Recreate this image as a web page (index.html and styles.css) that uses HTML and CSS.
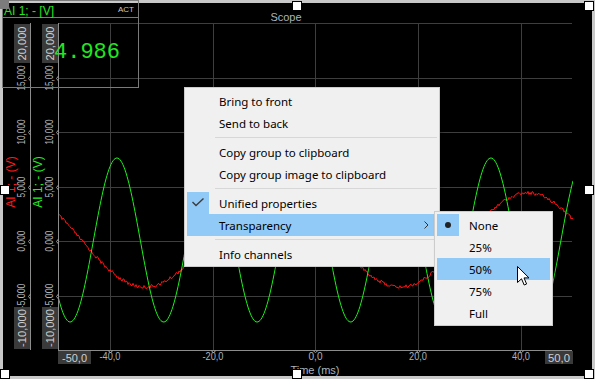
FILE: index.html
```html
<!DOCTYPE html>
<html lang="en">
<head>
  <meta charset="UTF-8">
  <meta name="viewport" content="width=device-width, initial-scale=1.0">
  <title>Scope</title>
  <link rel="stylesheet" href="styles.css">
</head>
<body>

  <div class="scope">
    <svg class="plot" width="595" height="379" viewBox="0 0 595 379">
      <defs>
        <clipPath id="plotArea"><rect x="58" y="23" width="515" height="328"/></clipPath>
      </defs>

      <text class="title" x="286" y="21" text-anchor="middle">Scope</text>

      <!-- grid -->
      <g class="grid">
        <line x1="58" y1="23.5" x2="572" y2="23.5"/>
        <line x1="58" y1="78.5" x2="572" y2="78.5"/>
        <line x1="58" y1="132.5" x2="572" y2="132.5"/>
        <line x1="58" y1="187.5" x2="572" y2="187.5"/>
        <line x1="58" y1="241.5" x2="572" y2="241.5"/>
        <line x1="58" y1="296.5" x2="572" y2="296.5"/>
        <line x1="110.5" y1="23" x2="110.5" y2="350"/>
        <line x1="213.5" y1="23" x2="213.5" y2="350"/>
        <line x1="315.5" y1="23" x2="315.5" y2="350"/>
        <line x1="418.5" y1="23" x2="418.5" y2="350"/>
        <line x1="521.5" y1="23" x2="521.5" y2="350"/>
      </g>

      <!-- traces -->
      <g clip-path="url(#plotArea)">
        <polyline id="traceRed" class="trace red"/>
        <polyline id="traceGreen" class="trace green"/>
      </g>

      <!-- axes -->
      <g class="axis">
        <line x1="30.5" y1="23" x2="30.5" y2="350"/>
        <line x1="58.5" y1="23" x2="58.5" y2="351"/>
        <line x1="58" y1="350.5" x2="572" y2="350.5"/>
      </g>
      <path class="tick" d="M30.5,76 l-2,2.5 l2,2.5 M30.5,130 l-2,2.5 l2,2.5 M30.5,185 l-2,2.5 l2,2.5 M30.5,239 l-2,2.5 l2,2.5 M30.5,294 l-2,2.5 l2,2.5
        M58.5,76 l-2,2.5 l2,2.5 M58.5,130 l-2,2.5 l2,2.5 M58.5,185 l-2,2.5 l2,2.5 M58.5,239 l-2,2.5 l2,2.5 M58.5,294 l-2,2.5 l2,2.5
        M108,350.5 l2.5,2 l2.5,-2 M211,350.5 l2.5,2 l2.5,-2 M313,350.5 l2.5,2 l2.5,-2 M416,350.5 l2.5,2 l2.5,-2 M519,350.5 l2.5,2 l2.5,-2"/>

      <!-- y tick labels -->
      <g class="tick-label" text-anchor="middle">
        <text transform="translate(25 78) rotate(-90)" textLength="25" lengthAdjust="spacingAndGlyphs">15,000</text>
        <text transform="translate(25 132) rotate(-90)" textLength="25" lengthAdjust="spacingAndGlyphs">10,000</text>
        <text transform="translate(25 187) rotate(-90)" textLength="21" lengthAdjust="spacingAndGlyphs">5,000</text>
        <text transform="translate(25 241) rotate(-90)" textLength="21" lengthAdjust="spacingAndGlyphs">0,000</text>
        <text transform="translate(25 296) rotate(-90)" textLength="25" lengthAdjust="spacingAndGlyphs">-5,000</text>
        <text transform="translate(53 78) rotate(-90)" textLength="25" lengthAdjust="spacingAndGlyphs">15,000</text>
        <text transform="translate(53 132) rotate(-90)" textLength="25" lengthAdjust="spacingAndGlyphs">10,000</text>
        <text transform="translate(53 187) rotate(-90)" textLength="21" lengthAdjust="spacingAndGlyphs">5,000</text>
        <text transform="translate(53 241) rotate(-90)" textLength="21" lengthAdjust="spacingAndGlyphs">0,000</text>
        <text transform="translate(53 296) rotate(-90)" textLength="25" lengthAdjust="spacingAndGlyphs">-5,000</text>
      </g>

      <!-- x tick labels -->
      <g class="tick-label" text-anchor="middle">
        <text x="110" y="360" textLength="21" lengthAdjust="spacingAndGlyphs">-40,0</text>
        <text x="213" y="360" textLength="21" lengthAdjust="spacingAndGlyphs">-20,0</text>
        <text x="315.5" y="360" textLength="14" lengthAdjust="spacingAndGlyphs">0,0</text>
        <text x="418" y="360" textLength="18" lengthAdjust="spacingAndGlyphs">20,0</text>
        <text x="521" y="360" textLength="18" lengthAdjust="spacingAndGlyphs">40,0</text>
      </g>
      <text class="title" x="315" y="374" text-anchor="middle">Time (ms)</text>

      <!-- range boxes -->
      <rect class="box" x="14" y="24" width="16" height="39"/>
      <rect class="box" x="42" y="24" width="16" height="39"/>
      <rect class="box" x="14" y="307" width="16" height="42"/>
      <rect class="box" x="42" y="307" width="16" height="42"/>
      <rect class="box" x="58" y="351" width="33" height="13"/>
      <rect class="box" x="545" y="351" width="28" height="13"/>
      <g class="box-label" text-anchor="middle">
        <text transform="translate(26 43.5) rotate(-90)" textLength="34" lengthAdjust="spacingAndGlyphs">20,000</text>
        <text transform="translate(54 43.5) rotate(-90)" textLength="34" lengthAdjust="spacingAndGlyphs">20,000</text>
        <text transform="translate(26 328) rotate(-90)" textLength="38" lengthAdjust="spacingAndGlyphs">-10,000</text>
        <text transform="translate(54 328) rotate(-90)" textLength="38" lengthAdjust="spacingAndGlyphs">-10,000</text>
        <text x="74.5" y="361.5" textLength="25" lengthAdjust="spacingAndGlyphs">-50,0</text>
        <text x="559" y="361.5" textLength="22" lengthAdjust="spacingAndGlyphs">50,0</text>
      </g>

      <!-- channel names -->
      <text class="channel red-text" transform="translate(15 182) rotate(-90)" text-anchor="middle">AI 1; - (V)</text>
      <text class="channel green-text" transform="translate(42 182) rotate(-90)" text-anchor="middle">AI 1; - (V)</text>
    </svg>

    <div class="meter">
      <div class="meter-head">
        <span class="meter-name">AI 1; - [V]</span>
        <span class="meter-act">ACT</span>
      </div>
      <div class="meter-value">4.986</div>
    </div>

    <div class="handle grip-tl"></div>
    <div class="handle grip-tm"></div>
    <div class="handle grip-tr"></div>
    <div class="handle grip-ml"></div>
    <div class="handle grip-mr"></div>
    <div class="handle grip-bl"></div>
    <div class="handle grip-bm"></div>
    <div class="handle grip-br"></div>

    <div class="menu main-menu">
      <div class="item"><span class="icon"></span><span class="label">Bring to front</span></div>
      <div class="item"><span class="icon"></span><span class="label">Send to back</span></div>
      <div class="sep"></div>
      <div class="item"><span class="icon"></span><span class="label">Copy group to clipboard</span></div>
      <div class="item"><span class="icon"></span><span class="label">Copy group image to clipboard</span></div>
      <div class="sep"></div>
      <div class="item">
        <span class="icon checked">
          <svg width="14" height="10" viewBox="0 0 14 10"><polyline points="1.5,4 5,7.5 12.5,0.5" fill="none" stroke="#3c3c3c" stroke-width="1.4"/></svg>
        </span>
        <span class="label">Unified properties</span>
      </div>
      <div class="item active">
        <span class="icon"></span><span class="label">Transparency</span>
        <svg class="arrow" width="5" height="8" viewBox="0 0 5 8"><polyline points="0.5,0.5 4,4 0.5,7.5" fill="none" stroke="#333" stroke-width="1"/></svg>
      </div>
      <div class="sep"></div>
      <div class="item"><span class="icon"></span><span class="label">Info channels</span></div>
    </div>

    <div class="menu sub-menu">
      <div class="item"><span class="icon checked"><span class="dot"></span></span><span class="label">None</span></div>
      <div class="item"><span class="icon"></span><span class="label">25%</span></div>
      <div class="item active"><span class="icon"></span><span class="label">50%</span></div>
      <div class="item"><span class="icon"></span><span class="label">75%</span></div>
      <div class="item"><span class="icon"></span><span class="label">Full</span></div>
    </div>

    <svg class="cursor" width="13" height="21" viewBox="0 0 13 21">
      <path d="M0.5,0.5 L0.5,16.5 L4.5,12.8 L7.2,19 L9.6,18 L7,11.9 L12,11.9 Z" fill="#fff" stroke="#000" stroke-width="1" stroke-linejoin="miter"/>
    </svg>
  </div>

  <script>
    function rnd(i) {
      const s = Math.sin(i * 12.9898) * 43758.5453;
      return s - Math.floor(s);
    }

    function trace(id, fn) {
      const pts = [];
      for (let x = 58; x <= 573; x++) {
        pts.push(x + "," + fn(x).toFixed(1));
      }
      document.getElementById(id).setAttribute("points", pts.join(" "));
    }

    trace("traceGreen", x => 240 - 82 * Math.sin(2 * Math.PI * (x - 93.5) / 93.5));
    trace("traceRed", x => 240 + 47 * Math.cos(2 * Math.PI * (x - 145) / 255) + (rnd(x) - 0.5) * 3.5);
  </script>

</body>
</html>
```

FILE: styles.css
```css
body {
  margin: 0;
  background: #fff;
}

.scope {
  position: relative;
  width: 595px;
  height: 379px;
  background: #000;
  box-shadow: inset 0 0 0 3px #c8c8c8;
  overflow: hidden;
}

.plot {
  display: block;
  font-family: 'Liberation Sans', Arial, sans-serif;
}

.grid line {
  stroke: #3e3e3e;
  stroke-width: 1;
}

.axis line {
  stroke: #8c8c8c;
  stroke-width: 1;
}

.tick {
  fill: none;
  stroke: #9a9a9a;
  stroke-width: 1;
}

.tick-label {
  fill: #aab2bb;
  font-size: 10px;
}

.title {
  fill: #aab4be;
  font-size: 11px;
}

.box {
  fill: #3a3a3a;
}

.box-label {
  fill: #cfcfcf;
  font-size: 11px;
}

.channel {
  font-size: 12px;
}
.red-text { fill: #ff1a1a; }
.green-text { fill: #22ee22; }

.trace {
  fill: none;
  stroke-width: 1;
}
.trace.red { stroke: #ff1010; }
.trace.green { stroke: #1cf01c; }

/* digital meter */
.meter {
  position: absolute;
  left: 2px;
  top: 0;
  width: 137px;
  height: 88px;
  box-sizing: border-box;
  border: 1px solid #7a7a7a;
  display: flex;
  flex-direction: column;
  font-family: 'Liberation Sans', Arial, sans-serif;
}

.meter-head {
  display: flex;
  justify-content: space-between;
  height: 17px;
  box-sizing: border-box;
  padding: 4px 4px 0 1px;
  border-bottom: 1px solid #7a7a7a;
}

.meter-name {
  color: #22e622;
  font-size: 12px;
  line-height: 12px;
}

.meter-act {
  color: #c8c8c8;
  font-size: 8px;
  line-height: 8px;
  margin-top: 1px;
}

.meter-value {
  flex: 1;
  display: flex;
  align-items: center;
  justify-content: flex-end;
  padding-right: 18px;
  color: #22e622;
  font-family: 'Liberation Mono', 'DejaVu Sans Mono', monospace;
  font-size: 22px;
  line-height: 22px;
}

/* selection grips */
.handle {
  position: absolute;
  width: 10px;
  height: 10px;
  box-sizing: border-box;
  background: #fff;
  border: 1px solid #000;
}
.grip-tl { left: 0; top: 0; width: 9px; height: 9px; background: #7c7c7c; border: none; }
.grip-tm { left: 292px; top: 1px; }
.grip-tr { left: 584px; top: 1px; }
.grip-ml { left: 0; top: 185px; }
.grip-mr { left: 584px; top: 185px; }
.grip-bl { left: 0; top: 369px; }
.grip-bm { left: 292px; top: 369px; }
.grip-br { left: 584px; top: 369px; }

/* context menu */
.menu {
  position: absolute;
  box-sizing: border-box;
  background: #f0f0f0;
  border: 1px solid #cccccc;
  padding: 2px 2px 1px 2px;
  font-family: 'Segoe UI', 'Noto Sans', sans-serif;
  font-size: 11.5px;
  color: #000;
  box-shadow: 2px 2px 3px rgba(0,0,0,0.25);
}

.main-menu {
  left: 184px;
  top: 87px;
  width: 256px;
}

.sub-menu {
  left: 434px;
  top: 211px;
  width: 119px;
}

.item {
  display: flex;
  align-items: center;
  height: 22px;
}
.item.active {
  background: #91c9f7;
}

.icon {
  width: 22px;
  height: 22px;
  flex-shrink: 0;
  display: flex;
  align-items: center;
  justify-content: center;
}
.icon.checked {
  background: #91c9f7;
}

.dot {
  width: 6px;
  height: 6px;
  border-radius: 50%;
  background: #222;
}

.label {
  margin-left: 10px;
  white-space: nowrap;
}

.arrow {
  margin-left: auto;
  margin-right: 8px;
}

.sep {
  height: 1px;
  background: #d7d7d7;
  margin: 3px 0 3px 28px;
}

.cursor {
  position: absolute;
  left: 517px;
  top: 266px;
}
```
